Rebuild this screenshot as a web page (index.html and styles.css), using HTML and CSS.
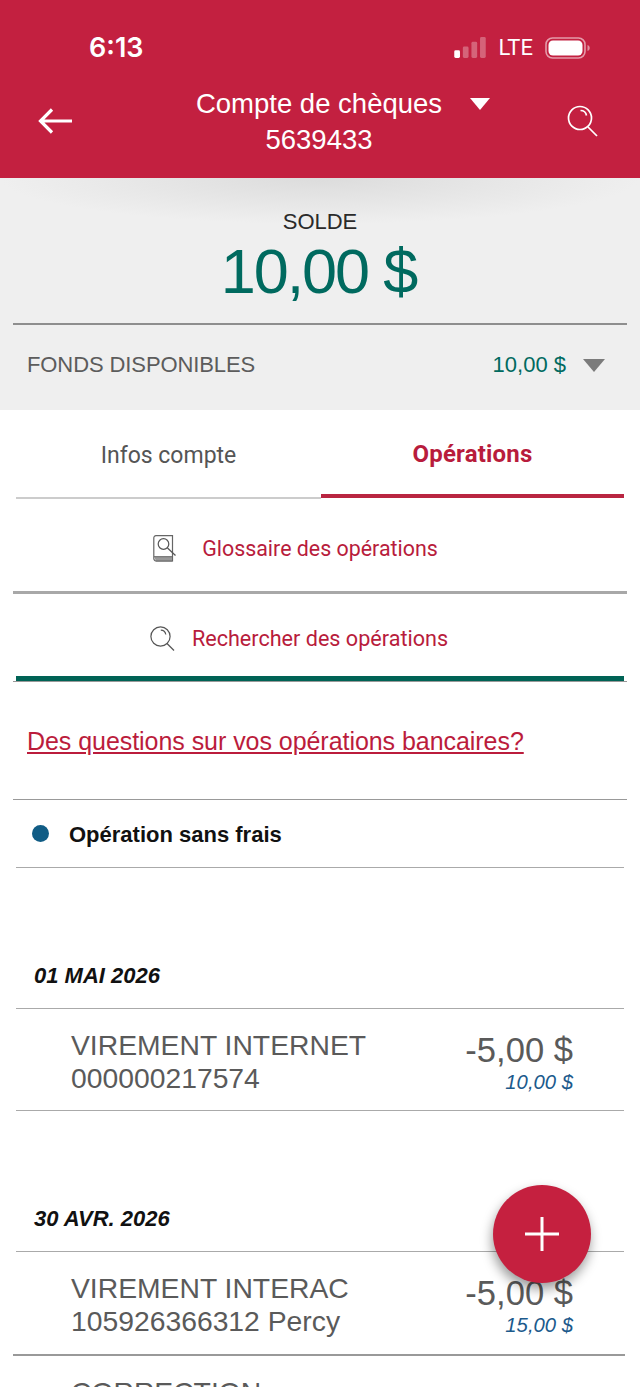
FILE: index.html
```html
<!DOCTYPE html>
<html>
  <head>
  <meta charset="UTF-8">
  <meta name="viewport" content="width=device-width,initial-scale=1.0">
  <link rel="stylesheet" href="styles.css">
  </head>
  <body>
    <div class="app">
      <div class="top_bar">
        <div class="status_row">
          <span class="clock">6:13</span>
          <div class="status_icons">
            <svg class="signal" width="32" height="21" viewBox="0 0 33 22">
              <rect x="0" y="14" width="6" height="8" rx="1.5" fill="#fff"/>
              <rect x="9" y="10" width="6" height="12" rx="1.5" fill="#fff" opacity=".3"/>
              <rect x="18" y="5" width="6" height="17" rx="1.5" fill="#fff" opacity=".3"/>
              <rect x="27" y="0" width="6" height="22" rx="1.5" fill="#fff" opacity=".3"/>
            </svg>
            <span class="lte">LTE</span>
            <svg class="battery" width="45" height="22" viewBox="0 0 45 22">
              <rect x="1" y="1" width="39" height="20" rx="6.5" fill="none" stroke="#fff" stroke-opacity=".55" stroke-width="1.6"/>
              <rect x="3.5" y="3.5" width="34" height="15" rx="4.5" fill="#fff"/>
              <path d="M42.5 8c1.6.5 2.2 1.6 2.2 3s-.6 2.500-2.200 3z" fill="#fff" opacity=".5"/>
            </svg>
          </div>
        </div>
        <div class="nav_row">
          <svg class="back_icon" width="36" height="28" viewBox="0 0 36 28">
            <path d="M34 14H3M14 2.500 2.500 14 14 25.500" fill="none" stroke="#fff" stroke-width="3.200"/>
          </svg>
          <div class="nav_title">
            <div class="title_line">Compte de chèques<span class="tri tri_white"></span></div>
            <div class="title_num">5639433</div>
          </div>
          <svg class="search_icon" width="32" height="32" viewBox="0 0 32 32">
            <circle cx="13" cy="13" r="11.500" fill="none" stroke="#fff" stroke-width="1.700"/>
            <path d="M21 22l9 9" stroke="#fff" stroke-width="1.700"/>
            <path d="M13.500 5.500c3 0 5.500 2 6 5" fill="none" stroke="#fff" stroke-width="1.700"/>
          </svg>
        </div>
      </div>

      <div class="balance">
        <div class="balance_main">
          <div class="solde_label">SOLDE</div>
          <div class="solde_amount">10,00 $</div>
        </div>
        <div class="funds_row">
          <span class="funds_label">FONDS DISPONIBLES</span>
          <span class="funds_right">
            <span class="funds_amount">10,00 $</span>
            <span class="tri tri_grey"></span>
          </span>
        </div>
      </div>

      <div class="tabs">
        <div class="tab">Infos compte</div>
        <div class="tab tab_active">Opérations</div>
      </div>

      <div class="link_row">
        <svg class="glossary_icon" width="24" height="27" viewBox="0 0 24 27">
          <path d="M3 .7h16.500v25.300H3.500c-1.600 0-2.700-1-2.700-2.500V3C.8 1.600 1.600.7 3 .7z" fill="none" stroke="#666" stroke-width="1.200"/>
          <path d="M1 21.700h18.500v4.300H3" fill="#999" stroke="#666" stroke-width="1"/>
          <circle cx="10.500" cy="9" r="5.300" fill="#fff" stroke="#555" stroke-width="1.200"/>
          <path d="M14.500 13l8 7.500" stroke="#555" stroke-width="1.200"/>
        </svg>
        <span>Glossaire des opérations</span>
      </div>

      <div class="link_row search_row">
        <svg class="row_search" width="25" height="25" viewBox="0 0 25 25">
          <circle cx="10.500" cy="10.500" r="9.600" fill="none" stroke="#555" stroke-width="1.200"/>
          <path d="M17 17.500l7 7" stroke="#555" stroke-width="1.200"/>
          <path d="M10.800 4.200c2.500 0 4.600 1.800 5 4.300" fill="none" stroke="#555" stroke-width="1.200"/>
        </svg>
        <span>Rechercher des opérations</span>
      </div>
      <div class="search_end"><div class="search_bar"></div></div>

      <div class="question_row"><a href="#">Des questions sur vos opérations bancaires?</a></div>

      <div class="legend_row"><span class="legend_dot"></span>Opération sans frais</div>

      <div class="date_head first">01 MAI 2026</div>
      <div class="op_row">
        <div class="op_info">
          <div>VIREMENT INTERNET</div>
          <div>000000217574</div>
        </div>
        <div class="op_amounts">
          <div class="op_amount">-5,00 $</div>
          <div class="op_balance">10,00 $</div>
        </div>
      </div>

      <div class="date_head">30 AVR. 2026</div>
      <div class="op_row second">
        <div class="op_info">
          <div>VIREMENT INTERAC</div>
          <div>105926366312 Percy</div>
        </div>
        <div class="op_amounts">
          <div class="op_amount">-5,00 $</div>
          <div class="op_balance">15,00 $</div>
        </div>
      </div>
      <div class="op_row last">
        <div class="op_info">
          <div>CORRECTION</div>
        </div>
      </div>

      <div class="fab">
        <svg width="36" height="36" viewBox="0 0 36 36">
          <path d="M18 1v34M1 18h34" stroke="#fff" stroke-width="3"/>
        </svg>
      </div>
    </div>
  </body>
</html>
```

FILE: styles.css
```css
*{
  margin:0;
  padding:0;
  box-sizing:border-box;
}
body{
  background-color:#ffffff;
  font-family:"Liberation Sans",Arial,sans-serif;
}
.app{
  position:relative;
  width:640px;
  height:1387px;
  overflow:hidden;
}
.top_bar{
  height:178px;
  background-color:#c32040;
  color:#ffffff;
}
.status_row{
  display:flex;
  justify-content:space-between;
  align-items:center;
  padding:31px 50px 0 89px;
  height:64px;
}
.clock{
  font-family:Inter,sans-serif;
  font-size:27px;
  font-weight:600;
}
.status_icons{
  display:flex;
  align-items:center;
}
.signal{
  margin-right:12px;
}
.lte{
  font-family:Roboto,sans-serif;
  font-size:22px;
  font-weight:400;
  margin-right:12px;
}
.nav_row{
  display:grid;
  grid-template-columns:1fr auto 1fr;
  align-items:center;
  padding:0 41px 0 39px;
  height:114px;
}
.back_icon{
  margin-left:-1px;
}
.search_icon{
  justify-self:end;
}
.nav_title{
  text-align:center;
  font-size:27.5px;
}
.title_line{
  line-height:38px;
}
.title_num{
  line-height:34px;
}
.tri{
  display:inline-block;
  width:0;
  height:0;
  border-left:10px solid transparent;
  border-right:10px solid transparent;
}
.tri_white{
  border-top:12px solid #ffffff;
  margin-left:28px;
  margin-right:-48px;
  vertical-align:3px;
}
.tri_grey{
  border-left-width:11px;
  border-right-width:11px;
  border-top:13px solid #7b7b7b;
}
.balance{
  height:232px;
  padding:0 13px;
  background-color:#efefef;
  background-image:radial-gradient(ellipse 320px 46px at 50% 0,#dcdcdc,#efefef);
}
.balance_main{
  height:147px;
  border-bottom:2px solid #8e8e8e;
  text-align:center;
  padding-top:31px;
}
.solde_label{
  font-size:22px;
  color:#2a2a2a;
  line-height:26px;
}
.solde_amount{
  font-size:63px;
  letter-spacing:-2.1px;
  padding-right:3px;
  color:#006a5f;
  line-height:72px;
}
.funds_row{
  display:flex;
  justify-content:space-between;
  align-items:center;
  height:80px;
  padding:0 22px 0 14px;
}
.funds_label{
  font-size:22px;
  letter-spacing:-.1px;
  color:#5c5c5c;
}
.funds_right{
  display:flex;
  align-items:center;
  gap:17px;
}
.funds_amount{
  font-size:22px;
  color:#006a5f;
}
.tabs{
  display:flex;
  height:89px;
  margin:0 16px;
  font-family:Roboto,sans-serif;
  font-size:23px;
}
.tab{
  flex:0 0 305px;
  display:flex;
  align-items:center;
  justify-content:center;
  padding-top:4px;
  color:#555555;
  border-bottom:2px solid #cccccc;
}
.tab_active{
  flex:1;
  font-size:24px;
  font-weight:700;
  letter-spacing:.2px;
  color:#b81c3c;
  border-bottom:4px solid #b92541;
  height:88px;
}
.link_row{
  display:flex;
  align-items:center;
  justify-content:center;
  margin:0 13px;
  height:95px;
  padding-top:6px;
  font-family:Roboto,sans-serif;
  font-size:21.4px;
  color:#b81c3c;
  border-bottom:3px solid #a8a8a8;
}
.glossary_icon{
  margin-left:-49px;
  margin-right:25px;
}
.search_row{
  height:82px;
  font-size:21.6px;
  border-bottom:0;
}
.row_search{
  margin-left:-42px;
  margin-right:17px;
}
.search_end{
  height:6px;
  margin:0 13px;
  padding:0 3px;
  border-bottom:1px solid #999999;
}
.search_bar{
  height:5px;
  background-color:#006355;
}
.question_row{
  height:118px;
  margin:0 13px;
  padding:45px 14px 0;
  font-size:25px;
  letter-spacing:-.05px;
  border-bottom:1px solid #999999;
}
.question_row a{
  color:#bb1c3c;
}
.legend_row{
  display:flex;
  align-items:center;
  height:68px;
  margin:0 16px;
  padding-top:3px;
  font-size:22px;
  font-weight:700;
  color:#111111;
  border-bottom:1px solid #aaaaaa;
}
.legend_dot{
  width:17px;
  height:17px;
  border-radius:50%;
  background-color:#105c85;
  margin:-3px 20px 0 16px;
}
.date_head{
  height:141px;
  margin:0 16px;
  padding:0 18px 19px;
  display:flex;
  align-items:flex-end;
  font-size:22px;
  font-weight:700;
  font-style:italic;
  color:#111111;
  border-bottom:1px solid #aaaaaa;
}
.op_row{
  display:flex;
  justify-content:space-between;
  height:102px;
  margin:0 16px;
  padding:20px 51px 0 55px;
  border-bottom:1px solid #aaaaaa;
  font-size:28.3px;
  line-height:33px;
  color:#5a5a5a;
}
.op_row.second{
  height:104px;
  margin:0 15px 0 13px;
  padding-left:58px;
  padding-right:52px;
  border-bottom:2px solid #999999;
}
.op_amount{
  font-size:34.6px;
  line-height:40px;
  margin-top:1px;
  text-align:right;
}
.op_balance{
  font-size:20.3px;
  line-height:24px;
  font-style:italic;
  color:#1c5a8c;
  text-align:right;
}
.op_row.last{
  border-bottom:0;
}
.fab{
  position:absolute;
  left:493px;
  top:1185px;
  width:98px;
  height:98px;
  border-radius:50%;
  background-color:#c5203f;
  box-shadow:-1px 6px 12px rgba(0,0,0,.4);
  display:flex;
  align-items:center;
  justify-content:center;
}
```
